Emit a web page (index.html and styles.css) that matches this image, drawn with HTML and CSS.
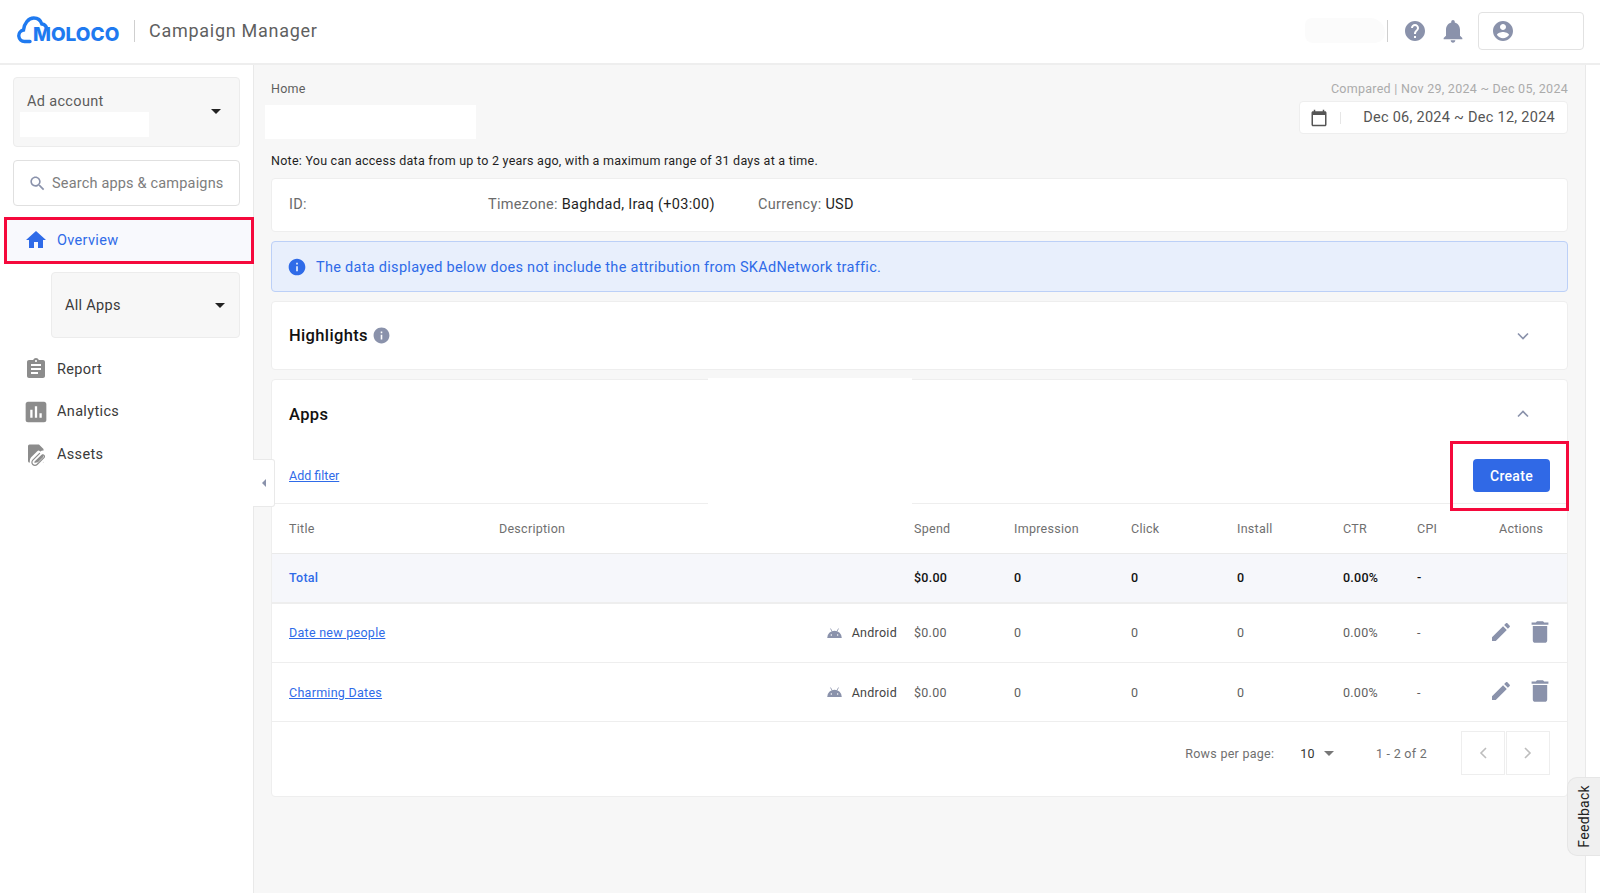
FILE: index.html
```html
<!DOCTYPE html>
<html lang="en">
<head>
<meta charset="utf-8">
<title>Campaign Manager</title>
<link rel="stylesheet" href="styles.css">
</head>
<body>
<header class="topbar">
  <div class="brand">
    <span class="logo">
      <svg class="logo-cloud" viewBox="0 0 32 30"><path d="M13 26.500H7.500a5.800 5.800 0 0 1-1-11.500C7 8.500 11.500 3 16.800 3c4 0 7 2.600 8 6 2.500.2 4.400 2 5 4.600" fill="none" stroke="#1f7af0" stroke-width="3.400" stroke-linecap="round"/></svg>
      <span class="logo-text">MOLOCO</span>
    </span>
    <span class="brand-sep"></span>
    <span class="brand-name">Campaign Manager</span>
  </div>
  <div class="top-actions">
    <span class="blob"></span>
    <span class="top-sep"></span>
    <svg class="top-icon" viewBox="0 0 24 24"><path d="M12 2C6.48 2 2 6.48 2 12s4.480 10 10 10 10-4.480 10-10S17.520 2 12 2zm1 17h-2v-2h2v2zm2.070-7.750l-.9.920C13.450 12.900 13 13.500 13 15h-2v-.5c0-1.100.45-2.100 1.170-2.830l1.240-1.260c.37-.36.59-.86.59-1.410 0-1.100-.9-2-2-2s-2 .9-2 2H8c0-2.210 1.790-4 4-4s4 1.790 4 4c0 .88-.36 1.680-.93 2.250z"/></svg>
    <svg class="top-icon bell" viewBox="0 0 24 24"><path d="M12 22c1.100 0 2-.9 2-2h-4c0 1.100.89 2 2 2zm6-6v-5c0-3.070-1.640-5.640-4.500-6.320V4c0-.83-.67-1.500-1.500-1.500s-1.500.67-1.500 1.500v.68C7.630 5.360 6 7.920 6 11v5l-2 2v1h16v-1l-2-2z"/></svg>
    <div class="account-btn">
      <svg class="top-icon" viewBox="0 0 24 24"><path d="M12 2C6.480 2 2 6.480 2 12s4.480 10 10 10 10-4.480 10-10S17.520 2 12 2zm0 3c1.660 0 3 1.340 3 3s-1.340 3-3 3-3-1.340-3-3 1.340-3 3-3zm0 14.200c-2.500 0-4.710-1.280-6-3.220.03-1.990 4-3.080 6-3.080 1.990 0 5.970 1.090 6 3.080-1.290 1.940-3.500 3.220-6 3.220z"/></svg>
    </div>
  </div>
</header>

<div class="layout">
  <aside class="sidebar">
    <div class="account-select">
      <div class="account-col">
        <span class="account-label">Ad account</span>
        <span class="account-mask"></span>
      </div>
      <span class="caret"></span>
    </div>
    <div class="search">
      <svg class="search-icon" viewBox="0 0 24 24"><path d="M15.500 14h-.79l-.28-.27C15.410 12.590 16 11.110 16 9.500 16 5.910 13.090 3 9.500 3S3 5.910 3 9.500 5.910 16 9.500 16c1.610 0 3.090-.59 4.230-1.570l.27.28v.79l5 4.990L20.490 19l-4.990-5zm-6 0C7.010 14 5 11.990 5 9.500S7.010 5 9.500 5 14 7.010 14 9.500 11.990 14 9.500 14z"/></svg>
      <span>Search apps &amp; campaigns</span>
    </div>
    <a class="nav-item nav-active">
      <svg class="nav-icon" viewBox="0 0 24 24"><path d="M10 20v-6h4v6h5v-8h3L12 3 2 12h3v8z"/></svg>
      <span>Overview</span>
    </a>
    <div class="app-select">
      <span>All Apps</span>
      <span class="caret"></span>
    </div>
    <nav class="nav-list">
      <a class="nav-item">
        <svg class="nav-icon" viewBox="0 0 24 24"><path d="M19 3h-4.180C14.400 1.840 13.300 1 12 1c-1.300 0-2.400.84-2.820 2H5c-1.100 0-2 .9-2 2v14c0 1.100.9 2 2 2h14c1.100 0 2-.9 2-2V5c0-1.100-.9-2-2-2zm-7 0c.55 0 1 .45 1 1s-.45 1-1 1-1-.45-1-1 .45-1 1-1zm2 14H7v-2h7v2zm3-4H7v-2h10v2zm0-4H7V7h10v2z"/></svg>
        <span>Report</span>
      </a>
      <a class="nav-item">
        <svg class="nav-icon" viewBox="0 0 24 24"><path d="M19 3H5c-1.100 0-2 .9-2 2v14c0 1.100.9 2 2 2h14c1.100 0 2-.9 2-2V5c0-1.100-.9-2-2-2zM9 17H7v-7h2v7zm4 0h-2V7h2v10zm4 0h-2v-4h2v4z" transform="translate(-1.800 -1.800) scale(1.150)"/></svg>
        <span>Analytics</span>
      </a>
      <a class="nav-item">
        <svg class="nav-icon" viewBox="0 0 24 24"><path d="M5.500 2.500h9.500l4.500 4.500v13.500h-14a1.500 1.500 0 0 1-1.500-1.500V4a1.500 1.500 0 0 1 1.500-1.500z"/><path d="M9 19.500l8.200-8.200a3 3 0 0 1 4.200 4.200l-6.900 6.900a4.200 4.200 0 0 1-5.900-5.900l6-6" fill="none" stroke="#fff" stroke-width="3.800" stroke-linecap="round"/><path d="M11 20l6.700-6.700a1.600 1.600 0 0 1 2.300 2.300l-6.900 6.900a3 3 0 0 1-4.300-4.300l6.800-6.800" fill="none" stroke="#8c8c8c" stroke-width="1.200" stroke-linecap="round"/></svg>
        <span>Assets</span>
      </a>
    </nav>
    <button class="collapse-handle" type="button"><span class="collapse-arrow"></span></button>
  </aside>

  <main class="content">
    <div class="page-head">
      <div class="page-head-left">
        <div class="crumb">Home</div>
        <div class="title-mask"></div>
      </div>
      <div class="page-head-right">
        <div class="compared">Compared | Nov 29, 2024 ~ Dec 05, 2024</div>
        <div class="date-box">
          <svg class="cal-icon" viewBox="0 0 24 24"><path d="M20 3h-1V1h-2v2H7V1H5v2H4c-1.100 0-2 .9-2 2v16c0 1.100.9 2 2 2h16c1.100 0 2-.9 2-2V5c0-1.100-.9-2-2-2zm0 18H4V8h16v13z"/></svg>
          <span class="date-sep"></span>
          <span class="date-text">Dec 06, 2024 ~ Dec 12, 2024</span>
        </div>
      </div>
    </div>
    <p class="note">Note: You can access data from up to 2 years ago, with a maximum range of 31 days at a time.</p>

    <section class="card id-card">
      <span class="meta meta-id"><span class="meta-key">ID:</span></span>
      <span class="meta meta-tz"><span class="meta-key">Timezone:</span> Baghdad, Iraq (+03:00)</span>
      <span class="meta"><span class="meta-key">Currency:</span> USD</span>
    </section>

    <section class="banner">
      <svg class="banner-icon" viewBox="0 0 24 24"><path d="M12 2C6.480 2 2 6.480 2 12s4.480 10 10 10 10-4.480 10-10S17.520 2 12 2zm1 15h-2v-6h2v6zm0-8h-2V7h2v2z"/></svg>
      <span class="banner-text">The data displayed below does not include the attribution from SKAdNetwork traffic.</span>
    </section>

    <section class="card highlights">
      <div class="section-title">
        <span>Highlights</span>
        <svg class="hl-info" viewBox="0 0 24 24"><path d="M12 2C6.480 2 2 6.480 2 12s4.480 10 10 10 10-4.480 10-10S17.520 2 12 2zm1 15h-2v-6h2v6zm0-8h-2V7h2v2z"/></svg>
      </div>
      <svg class="chev" viewBox="0 0 12 8"><path d="M1 1.500l5 5 5-5" fill="none" stroke="#8a92ab" stroke-width="1.600"/></svg>
    </section>

    <section class="card apps">
      <span class="apps-mask"></span>
      <div class="apps-head">
        <div class="section-title"><span>Apps</span></div>
        <svg class="chev" viewBox="0 0 12 8"><path d="M1 6.500l5-5 5 5" fill="none" stroke="#8a92ab" stroke-width="1.600"/></svg>
      </div>
      <div class="filter-row">
        <a class="add-filter">Add filter</a>
        <button class="create-btn" type="button">Create</button>
        <span class="red-box"></span>
      </div>
      <table class="apps-table">
        <colgroup>
          <col class="c-title"><col class="c-desc"><col class="c-spend"><col class="c-imp"><col class="c-click"><col class="c-inst"><col class="c-ctr"><col class="c-cpi"><col>
        </colgroup>
        <thead>
          <tr>
            <th class="first">Title</th><th>Description</th><th>Spend</th><th>Impression</th><th>Click</th><th>Install</th><th>CTR</th><th>CPI</th><th>Actions</th>
          </tr>
        </thead>
        <tbody>
          <tr class="total">
            <td class="first total-link">Total</td><td></td><td>$0.00</td><td>0</td><td>0</td><td>0</td><td>0.00%</td><td>-</td><td></td>
          </tr>
          <tr class="row">
            <td class="first"><a class="app-link">Date new people</a></td>
            <td><div class="platform"><svg class="android" viewBox="0 0 16 11"><path d="M0 11a8 8 0 0 1 16 0zM4.500 6.800a.8.8 0 1 0 0 1.600.8.8 0 0 0 0-1.600zm7 0a.8.8 0 1 0 0 1.600.8.8 0 0 0 0-1.600z" fill-rule="evenodd"/><path d="M3.600.6l1.500 2.800M12.400.6l-1.500 2.800" stroke="#8a92ab" stroke-width=".9"/></svg><span>Android</span></div></td>
            <td>$0.00</td><td>0</td><td>0</td><td>0</td><td>0.00%</td><td>-</td>
            <td><div class="actions">
              <svg class="act-icon" viewBox="0 0 24 24"><path d="M3 17.250V21h3.750L17.810 9.940l-3.750-3.750L3 17.250zM20.710 7.040c.39-.39.39-1.020 0-1.410l-2.340-2.340c-.39-.39-1.020-.39-1.410 0l-1.830 1.830 3.750 3.750 1.830-1.830z"/></svg>
              <svg class="act-icon" viewBox="0 0 24 24"><path d="M6 19c0 1.100.9 2 2 2h8c1.100 0 2-.9 2-2V7H6v12zM19 4h-3.500l-1-1h-5l-1 1H5v2h14V4z" transform="translate(-2.400 -2.400) scale(1.200)"/></svg>
            </div></td>
          </tr>
          <tr class="row">
            <td class="first"><a class="app-link">Charming Dates</a></td>
            <td><div class="platform"><svg class="android" viewBox="0 0 16 11"><path d="M0 11a8 8 0 0 1 16 0zM4.500 6.800a.8.8 0 1 0 0 1.600.8.8 0 0 0 0-1.600zm7 0a.8.8 0 1 0 0 1.600.8.8 0 0 0 0-1.600z" fill-rule="evenodd"/><path d="M3.600.6l1.500 2.800M12.400.6l-1.500 2.800" stroke="#8a92ab" stroke-width=".9"/></svg><span>Android</span></div></td>
            <td>$0.00</td><td>0</td><td>0</td><td>0</td><td>0.00%</td><td>-</td>
            <td><div class="actions">
              <svg class="act-icon" viewBox="0 0 24 24"><path d="M3 17.250V21h3.750L17.810 9.940l-3.750-3.750L3 17.250zM20.710 7.040c.39-.39.39-1.020 0-1.410l-2.340-2.340c-.39-.39-1.020-.39-1.410 0l-1.830 1.830 3.750 3.750 1.830-1.830z"/></svg>
              <svg class="act-icon" viewBox="0 0 24 24"><path d="M6 19c0 1.100.9 2 2 2h8c1.100 0 2-.9 2-2V7H6v12zM19 4h-3.500l-1-1h-5l-1 1H5v2h14V4z" transform="translate(-2.400 -2.400) scale(1.200)"/></svg>
            </div></td>
          </tr>
        </tbody>
      </table>
      <div class="pager">
        <span class="pager-label">Rows per page:</span>
        <span class="pager-size">10</span>
        <span class="pager-caret"></span>
        <span class="pager-range">1 - 2 of 2</span>
        <div class="pager-btns">
          <span class="pager-btn"><svg class="pager-chev" viewBox="0 0 8 12"><path d="M7 1L2 6l5 5" fill="none" stroke="#bdbdbd" stroke-width="1.600"/></svg></span>
          <span class="pager-btn"><svg class="pager-chev" viewBox="0 0 8 12"><path d="M1 1l5 5-5 5" fill="none" stroke="#bdbdbd" stroke-width="1.600"/></svg></span>
        </div>
      </div>
    </section>
  </main>
  <div class="rail"></div>
</div>
<div class="feedback"><span>Feedback</span></div>
</body>
</html>
```

FILE: styles.css
```css
* { box-sizing: border-box; }
html, body { height: 100%; }
body {
  margin: 0;
  height: 893px;
  overflow: hidden;
  background: #fff;
  font-family: Roboto, "Liberation Sans", sans-serif;
  font-size: 14.5px;
  color: #1f1f1f;
  position: relative;
}
.topbar {
  height: 65px;
  background: #fff;
  border-bottom: 2px solid #eeeeee;
  display: flex;
  align-items: center;
  justify-content: space-between;
  padding: 0 16px 2px 17px;
}
.brand { display: flex; align-items: center; }
.logo { position: relative; display: block; width: 103px; height: 30px; }
.logo-cloud { position: absolute; left: 0; top: -1px; width: 32px; height: 30px; }
.logo-text {
  position: absolute;
  left: 16px;
  top: 8px;
  font-family: Inter, "DejaVu Sans", sans-serif;
  font-weight: 800;
  font-size: 19px;
  line-height: 22px;
  letter-spacing: 0;
  color: #1f7af0;
}
.brand-sep { width: 1px; height: 22px; background: #cfcfcf; margin: 0 14px 0 14px; }
.brand-name { font-size: 18px; letter-spacing: .72px; color: #5f5f5f; }
.top-actions { display: flex; align-items: center; }
.blob {
  width: 80px; height: 25px;
  border-radius: 14px 30px 20px 16px;
  background: #fbfbfb;
  margin-right: 2px;
}
.top-sep { width: 1px; height: 22px; background: #cfcfcf; margin-right: 15px; }
.top-icon { width: 24px; height: 24px; fill: #8a92ab; display: block; }
.bell { width: 28px; height: 28px; margin: 0 11px 0 12px; }
.account-btn {
  width: 106px; height: 38px;
  border: 1px solid #e2e2e2;
  border-radius: 4px;
  display: flex;
  align-items: center;
  padding-left: 11.5px;
}
.layout { display: flex; height: 828px; }
.sidebar {
  width: 254px;
  flex: none;
  border-right: 1px solid #e9e9e9;
  padding-top: 12px;
  position: relative;
  background: #fff;
}
.account-select {
  margin: 0 13px;
  width: 227px;
  height: 70px;
  background: #f7f7f7;
  border: 1px solid #ececec;
  border-radius: 4px;
  display: flex;
  align-items: center;
  justify-content: space-between;
  padding: 0 18px 2px 6px;
}
.account-col { display: flex; flex-direction: column; padding-top: 7px; }
.account-label { padding-left: 7px; line-height: 20px; letter-spacing: .33px; color: #5c5c5c; }
.account-mask { width: 129px; height: 25px; background: #fff; }
.caret {
  width: 0; height: 0;
  border-left: 5px solid transparent;
  border-right: 5px solid transparent;
  border-top: 5px solid #222;
}
.search {
  margin: 13px 13px 11px;
  width: 227px;
  height: 46px;
  border: 1px solid #e0e0e0;
  border-radius: 4px;
  display: flex;
  align-items: center;
  padding-left: 14px;
  letter-spacing: .18px;
  color: #7d7d7d;
}
.search-icon { width: 19px; height: 19px; fill: #8a92ab; margin-right: 5px; flex: none; }
.nav-item {
  display: flex;
  align-items: center;
  height: 42.5px;
  padding-left: 24px;
  letter-spacing: .34px;
  color: #3a3a3a;
}
.nav-icon { width: 24px; height: 24px; fill: #8c8c8c; margin-right: 9px; flex: none; }
.nav-active {
  margin-left: 4px;
  width: 250px;
  height: 47px;
  padding: 0 0 1px 17px;
  border: 3px solid #f5093c;
  background: #f8f9fd;
  color: #2f6be8;
}
.nav-active .nav-icon { fill: #2f6be8; }
.app-select {
  margin: 8px 13px 10px 51px;
  width: 189px;
  height: 66px;
  background: #f7f7f7;
  border: 1px solid #ececec;
  border-radius: 4px;
  display: flex;
  align-items: center;
  justify-content: space-between;
  padding: 0 14px 0 13px;
  letter-spacing: .3px;
  color: #3a3a3a;
}
.collapse-handle {
  position: absolute;
  left: 253px;
  top: 394px;
  width: 22px;
  height: 48px;
  padding: 0;
  background: #fff;
  border: 1px solid #e9e9e9;
  border-left: 0;
  border-radius: 0 3px 3px 0;
  display: flex;
  align-items: center;
  justify-content: center;
  z-index: 2;
}
.collapse-arrow {
  width: 0; height: 0;
  border-top: 4px solid transparent;
  border-bottom: 4px solid transparent;
  border-right: 4px solid #8a92ab;
}
.content {
  flex: 1;
  background: #f7f7f7;
  padding: 0 17px 0 17px;
  min-width: 0;
}
.rail { width: 15px; flex: none; background: #fff; border-left: 1px solid #e9e9e9; }
.page-head { display: flex; justify-content: space-between; }
.page-head-left { padding-top: 14px; }
.crumb { line-height: 20px; font-size: 12.5px; letter-spacing: .27px; color: #5f5f5f; }
.title-mask { width: 211px; height: 34px; background: #fff; margin: 6px 0 0 -6px; }
.page-head-right { padding-top: 14px; display: flex; flex-direction: column; align-items: flex-end; }
.compared { line-height: 20px; font-size: 12.5px; letter-spacing: .27px; color: #ababab; }
.date-box {
  width: 269px; height: 33px;
  margin-top: 2px;
  background: #fff;
  border: 1px solid #eeeeee;
  border-radius: 4px;
  display: flex;
  align-items: center;
  padding: 0 12px 0 10px;
}
.cal-icon { width: 18px; height: 18px; fill: #555; flex: none; }
.date-sep { width: 1px; height: 12px; background: #e6e6e6; margin-left: 12px; }
.date-text { margin-left: auto; letter-spacing: .27px; color: #555; font-size: 14.5px; }
.note { margin: 12px 0 7px; line-height: 20px; font-size: 12.5px; letter-spacing: .25px; color: #1f1f1f; }
.card { background: #fff; border: 1px solid #eeeeee; border-radius: 4px; }
.id-card { height: 54px; display: flex; align-items: center; padding: 0 17px 2px; font-size: 14.5px; letter-spacing: .3px; margin-bottom: 9px; }
.meta-key { color: #6b6b6b; }
.meta-id { width: 199px; }
.meta-tz { width: 270px; }
.meta { color: #1f1f1f; }
.banner {
  height: 51px;
  background: #e8effc;
  border: 1px solid #bcd0f7;
  border-radius: 4px;
  display: flex;
  align-items: center;
  padding-left: 15px;
  font-size: 14.5px;
  letter-spacing: .29px;
  color: #2f6be8;
  margin-bottom: 9px;
}
.banner-icon { width: 20px; height: 20px; fill: #2f6be8; margin-right: 9px; flex: none; }
.banner-text { padding-top: 1px; }
.highlights { height: 69px; display: flex; align-items: center; justify-content: space-between; padding: 0 38px 0 17px; margin-bottom: 9px; }
.section-title { display: flex; align-items: center; font-size: 16.5px; font-weight: 500; letter-spacing: .35px; color: #111; }
.hl-info { width: 19px; height: 19px; fill: #8a92ab; margin-left: 4px; }
.chev { width: 12px; height: 8px; display: block; }
.apps { height: 418px; position: relative; }
.apps-mask { position: absolute; left: 436px; top: -2px; width: 204px; height: 127px; background: #fff; z-index: 1; }
.apps-head { height: 68px; display: flex; align-items: center; justify-content: space-between; padding: 0 38px 0 17px; }
.filter-row { height: 55px; display: flex; align-items: center; justify-content: space-between; padding: 0 17px 0 17px; position: relative; }
.add-filter { font-size: 12.5px; color: #2f6be8; text-decoration: underline; }
.create-btn {
  width: 77px; height: 33px;
  background: #3069e6;
  color: #fff;
  border: 0;
  border-radius: 4px;
  font: 500 14px Roboto, sans-serif;
  letter-spacing: .3px;
}
.red-box { position: absolute; right: -2px; top: -7px; width: 119px; height: 70px; border: 3px solid #f5093c; z-index: 2; }
.apps-table { width: 100%; table-layout: fixed; border-collapse: collapse; font-size: 12.5px; letter-spacing: .27px; }
.c-title { width: 227px; }
.c-desc { width: 415px; }
.c-spend { width: 100px; }
.c-imp { width: 117px; }
.c-click { width: 106px; }
.c-inst { width: 106px; }
.c-ctr { width: 74px; }
.c-cpi { width: 82px; }
.apps-table th, .apps-table td { padding: 0; text-align: left; }
.apps-table th { height: 50px; font-weight: 400; color: #6f6f6f; border-top: 1px solid #eeeeee; }
.apps-table .first { padding-left: 17px; }
.total td { height: 49px; background: #f6f7fb; font-weight: 500; color: #111; border-top: 1px solid #eaeaea; border-bottom: 2px solid #eeeeee; }
.apps-table .total-link { color: #2f6be8; }
.row td { height: 60px; color: #5f5f5f; border-bottom: 1px solid #eeeeee; }
.row:last-child td { height: 59px; }
.app-link { color: #2f6be8; text-decoration: underline; }
.platform { display: flex; align-items: center; justify-content: flex-end; padding-right: 17px; color: #444; }
.android { width: 15px; height: 10px; fill: #8a92ab; margin-right: 10px; }
.actions { display: flex; align-items: center; margin-left: -10px; padding-bottom: 2px; }
.act-icon { width: 24px; height: 24px; fill: #8a92ab; margin-right: 15px; flex: none; }
.pager { height: 74px; display: flex; align-items: center; justify-content: flex-end; padding: 0 17px 12px 0; font-size: 12.5px; letter-spacing: .27px; color: #6f6f6f; }
.pager-size { margin-left: 26px; color: #333; }
.pager-caret { width: 0; height: 0; border-left: 5px solid transparent; border-right: 5px solid transparent; border-top: 5px solid #777; margin-left: 9px; }
.pager-range { margin-left: 42px; margin-right: 34px; }
.pager-btns { display: flex; gap: 1px; }
.pager-btn { width: 44px; height: 44px; border: 1px solid #eeeeee; display: flex; align-items: center; justify-content: center; }
.pager-chev { width: 8px; height: 12px; }
.feedback {
  position: absolute;
  left: 1567px;
  top: 777px;
  width: 33px;
  height: 79px;
  background: #f0f0f0;
  border: 1px solid #e6e6e6;
  border-right: 0;
  border-radius: 10px 0 0 10px;
  display: flex;
  align-items: center;
  justify-content: center;
  z-index: 3;
}
.feedback span { writing-mode: vertical-rl; transform: rotate(180deg); font-size: 14px; letter-spacing: .3px; color: #222; }
```
